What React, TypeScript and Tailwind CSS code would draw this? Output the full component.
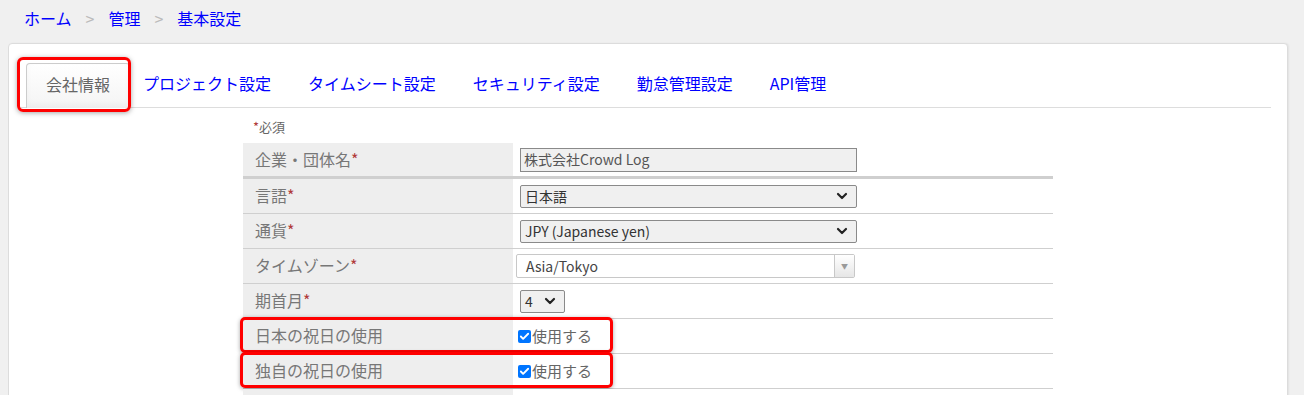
import { Check } from 'lucide-react';

const font = { fontFamily: '"Noto Sans CJK JP", "Noto Sans", sans-serif' };

function Chevron() {
  return (
    <svg width="12" height="8" viewBox="0 0 12 8" className="shrink-0">
      <path d="M2 2 L6 6 L10 2" stroke="#222" strokeWidth="2.2" fill="none" strokeLinecap="round" strokeLinejoin="round" />
    </svg>
  );
}

function Req() {
  return <span className="text-[#b03a3a]">*</span>;
}

function Row({
  label,
  required,
  thick,
  children,
  marked,
}: {
  label: string;
  required?: boolean;
  thick?: boolean;
  children?: React.ReactNode;
  marked?: boolean;
}) {
  return (
    <div
      className={`relative flex ${thick ? 'h-[36px] border-b-[3px]' : 'h-[35px] border-b'} border-[#cfcfcf]`}
    >
      <div className="w-[270px] bg-[#eeeeee] pl-[12px] pb-[2px] flex items-center text-[16px] text-[#777]">
        {label}
        {required && <Req />}
      </div>
      <div className="flex-1 bg-white pl-[7px] flex items-center">{children}</div>
      {marked && (
        <div className="absolute left-[-3px] top-[-2px] w-[373px] h-[36px] border-[3px] border-[#ff0000] rounded-[5px] shadow-[0_1px_4px_rgba(0,0,0,0.35)] pointer-events-none" />
      )}
    </div>
  );
}

function SelectBox({ value, w = 'w-[337px]' }: { value: string; w?: string }) {
  return (
    <div
      className={`${w} h-[23px] bg-[#f0f0f0] border border-[#8a8a8a] rounded-[2px] flex items-center justify-between pl-[4px] pr-[8px] text-[14px] text-[#333]`}
    >
      <span>{value}</span>
      <Chevron />
    </div>
  );
}

function CheckUse() {
  return (
    <div className="flex items-center ml-[-2px] text-[15px] text-[#666]">
      <span className="w-[13px] h-[13px] rounded-[2px] bg-[#0075ff] flex items-center justify-center">
        <Check size={11} strokeWidth={4} color="white" />
      </span>
      <span className="ml-[1px]">使用する</span>
    </div>
  );
}

export default function App() {
  const tabs = ['プロジェクト設定', 'タイムシート設定', 'セキュリティ設定', '勤怠管理設定', 'API管理'];

  return (
    <div className="min-h-screen bg-[#f0f0f0] pl-[8px] pr-[16px]" style={font}>
      <div className="h-[43px] pt-[8px] pl-[16px] flex items-start text-[16px] leading-[20px]">
        <span className="text-[#0000ff]">ホーム</span>
        <span className="text-[#bbb] mx-[14px]">&gt;</span>
        <span className="text-[#0000ff]">管理</span>
        <span className="text-[#bbb] mx-[14px]">&gt;</span>
        <span className="text-[#0000ff]">基本設定</span>
      </div>

      <div className="bg-white border border-[#dcdcdc] rounded-[4px] pt-[19px] pl-[11px] pr-[16px] pb-[20px] shadow-[1px_0_2px_rgba(0,0,0,0.06)]">
        <div className="relative flex items-end h-[45px] border-b border-[#dddddd]">
          <div className="ml-[6px] w-[104px] h-[45px] mb-[-1px] pb-[4px] border border-[#cccccc] border-b-0 rounded-t-[4px] bg-gradient-to-b from-white to-[#f4f4f4] shadow-[inset_0_-3px_6px_rgba(0,0,0,0.04)] flex items-center justify-center text-[16px] text-[#666]">
            会社情報
          </div>
          <div className="ml-[13px] h-[45px] pb-[4px] flex items-center gap-[37px] text-[16px] text-[#0000ff]">
            {tabs.map((t) => (
              <span key={t}>{t}</span>
            ))}
          </div>
          <div className="absolute left-[-3px] top-[-6px] w-[114px] h-[55px] border-[3px] border-[#ff0000] rounded-[6px] shadow-[0_1px_5px_rgba(0,0,0,0.35)] pointer-events-none" />
        </div>

        <div className="ml-[223px] w-[810px]">
          <div className="mt-[11px] mb-[8px] pl-[10px] text-[13px] leading-[16px] text-[#666]">
            <Req />必須
          </div>

          <Row label="企業・団体名" required thick>
            <div className="w-[337px] h-[24px] bg-[#f0f0f0] border border-[#8a8a8a] flex items-center pl-[3px] text-[14px] text-[#555]">
              株式会社Crowd Log
            </div>
          </Row>
          <Row label="言語" required>
            <SelectBox value="日本語" />
          </Row>
          <Row label="通貨" required>
            <SelectBox value="JPY (Japanese yen)" />
          </Row>
          <Row label="タイムゾーン" required>
            <div className="ml-[-4px] w-[339px] h-[24px] bg-white border border-[#c8c8c8] rounded-[2px] flex items-center text-[14px] text-[#444]">
              <span className="flex-1 pl-[9px]">Asia/Tokyo</span>
              <span className="w-[20px] h-full border-l border-[#c8c8c8] bg-gradient-to-b from-white to-[#e6e6e6] flex items-center justify-center">
                <span className="text-[#999] text-[7px] leading-none">▼</span>
              </span>
            </div>
          </Row>
          <Row label="期首月" required>
            <SelectBox value="4" w="w-[45px]" />
          </Row>
          <Row label="日本の祝日の使用" marked>
            <CheckUse />
          </Row>
          <Row label="独自の祝日の使用" marked>
            <CheckUse />
          </Row>
          <Row label="">
            <span />
          </Row>
        </div>
      </div>
    </div>
  );
}
